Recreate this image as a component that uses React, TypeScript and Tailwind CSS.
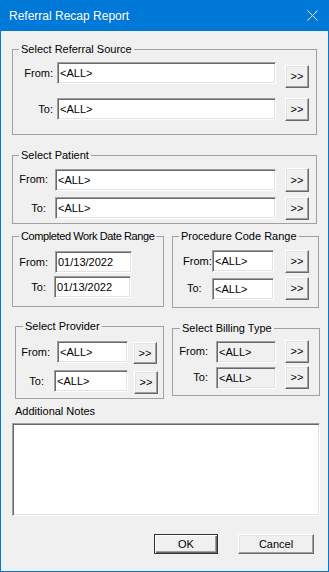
import React from 'react';

const sunken =
  'border border-t-[#a0a0a0] border-l-[#a0a0a0] border-r-white border-b-white shadow-[inset_1px_1px_0_#696969,inset_-1px_-1px_0_#e3e3e3]';
const raised =
  'border border-t-white border-l-white border-r-[#696969] border-b-[#696969] shadow-[inset_-1px_-1px_0_#a0a0a0,inset_1px_1px_0_#e3e3e3] bg-[#f0f0f0]';

interface RowProps {
  label: string;
  value: string;
  rowCls: string; // margin of the row
  labelCls: string; // width + alignment of label column
  inputCls: string; // width / offset of the input
  buttonCls: string; // offset / size of the button
  disabled?: boolean;
}

const Row: React.FC<RowProps> = ({ label, value, rowCls, labelCls, inputCls, buttonCls, disabled }) => (
  <div className={`flex items-start ${rowCls}`}>
    <div className={`h-[22px] flex items-center shrink-0 whitespace-nowrap ${labelCls}`}>{label}</div>
    <input
      readOnly
      value={value}
      className={`h-[22px] px-[2px] outline-none shrink-0 ${sunken} ${disabled ? 'bg-[#f0f0f0]' : 'bg-white'} ${inputCls}`}
    />
    <button className={`w-[24px] shrink-0 flex items-center justify-center text-[11px] leading-none ${raised} ${buttonCls}`}>
      &gt;&gt;
    </button>
  </div>
);

const Legend: React.FC<{ text: string; cls?: string }> = ({ text, cls }) => (
  <legend className={`px-[2px] leading-[14px] whitespace-nowrap ${cls ?? 'ml-[6px]'}`}>{text}</legend>
);

export default function App() {
  return (
    <div className="w-[329px] h-[572px] flex flex-col bg-[#0078d7] font-['Liberation_Sans',Arial,sans-serif] text-[11px] text-black select-none">
      {/* title bar */}
      <div className="h-[31px] shrink-0 flex items-center justify-between pl-[9px] pr-[11px] text-white text-[12px]">
        <span>Referral Recap Report</span>
        <svg width="11" height="11" viewBox="0 0 11 11">
          <path d="M0.5 0.5 L10.5 10.5 M10.5 0.5 L0.5 10.5" stroke="white" strokeWidth="1" />
        </svg>
      </div>

      {/* body */}
      <div className="flex-1 mx-[1px] mb-[1px] bg-[#f0f0f0] flex flex-col">
        {/* Select Referral Source */}
        <fieldset className="ml-[11px] mt-[11px] w-[305px] min-w-0 border border-[#a0a0a0] pb-[13px]">
          <Legend text="Select Referral Source" />
          <Row
            label="From:"
            value="<ALL>"
            rowCls="mt-[6px]"
            labelCls="w-[40px] justify-end"
            inputCls="ml-[4px] w-[219px]"
            buttonCls="ml-[9px] mt-[3px] h-[23px]"
          />
          <Row
            label="To:"
            value="<ALL>"
            rowCls="mt-[10px]"
            labelCls="w-[40px] justify-end"
            inputCls="ml-[4px] w-[219px]"
            buttonCls="ml-[9px] h-[23px]"
          />
        </fieldset>

        {/* Select Patient */}
        <fieldset className="ml-[11px] mt-[13px] w-[305px] min-w-0 border border-[#a0a0a0] pb-[3px]">
          <Legend text="Select Patient" />
          <Row
            label="From:"
            value="<ALL>"
            rowCls="mt-[6px]"
            labelCls="w-[35px] justify-end"
            inputCls="ml-[7px] mt-[1px] w-[221px]"
            buttonCls="ml-[9px] h-[24px]"
          />
          <Row
            label="To:"
            value="<ALL>"
            rowCls="mt-[5px]"
            labelCls="w-[33px] justify-end"
            inputCls="ml-[9px] w-[221px]"
            buttonCls="ml-[9px] h-[23px]"
          />
        </fieldset>

        {/* date range + procedure code */}
        <div className="flex items-start mt-[5px]">
          <fieldset className="ml-[11px] w-[152px] min-w-0 shrink-0 border border-[#a0a0a0] pb-[8px]">
            <Legend text="Completed Work Date Range" cls="ml-[6px] tracking-[-0.4px]" />
            <div className="flex items-center mt-[8px]">
              <div className="w-[35px] h-[22px] flex items-center justify-end">From:</div>
              <input readOnly value="01/13/2022" className={`ml-[7px] w-[77px] h-[22px] px-[2px] bg-white outline-none ${sunken}`} />
            </div>
            <div className="flex items-center mt-[3px]">
              <div className="w-[33px] h-[22px] flex items-center justify-end">To:</div>
              <input readOnly value="01/13/2022" className={`ml-[8px] w-[77px] h-[22px] px-[2px] bg-white outline-none ${sunken}`} />
            </div>
          </fieldset>

          <fieldset className="ml-[8px] w-[147px] min-w-0 shrink-0 border border-[#a0a0a0] pb-[7px]">
            <Legend text="Procedure Code Range" />
            <Row
              label="From:"
              value="<ALL>"
              rowCls="mt-[7px]"
              labelCls="w-[39px] pl-[10px]"
              inputCls="w-[62px]"
              buttonCls="ml-[11px] h-[23px]"
            />
            <Row
              label="To:"
              value="<ALL>"
              rowCls="mt-[4px]"
              labelCls="w-[39px] pl-[14px]"
              inputCls="mt-[1px] w-[62px]"
              buttonCls="ml-[11px] h-[23px]"
            />
          </fieldset>
        </div>

        {/* provider + billing type */}
        <div className="flex items-start mt-[11px]">
          <fieldset className="ml-[14px] w-[149px] min-w-0 shrink-0 border border-[#a0a0a0] pb-[4px]">
            <Legend text="Select Provider" cls="ml-[7px]" />
            <Row
              label="From:"
              value="<ALL>"
              rowCls="mt-[8px]"
              labelCls="w-[34px] justify-end"
              inputCls="ml-[7px] w-[71px]"
              buttonCls="ml-[5px] mt-[1px] h-[22px]"
            />
            <Row
              label="To:"
              value="<ALL>"
              rowCls="mt-[6px]"
              labelCls="w-[28px] justify-end"
              inputCls="ml-[10px] w-[74px]"
              buttonCls="ml-[6px] mt-[1px] h-[23px]"
            />
          </fieldset>

          <fieldset className="ml-[8px] mt-[2px] w-[148px] min-w-0 shrink-0 border border-[#a0a0a0] pb-[6px]">
            <Legend text="Select Billing Type" cls="ml-[7px]" />
            <Row
              label="From:"
              value="<ALL>"
              rowCls="mt-[5px]"
              labelCls="w-[35px] justify-end"
              inputCls="ml-[8px] mt-[1px] w-[60px]"
              buttonCls="ml-[9px] h-[23px]"
              disabled
            />
            <Row
              label="To:"
              value="<ALL>"
              rowCls="mt-[3px]"
              labelCls="w-[35px] justify-end"
              inputCls="ml-[8px] mt-[1px] w-[60px]"
              buttonCls="ml-[9px] h-[23px]"
              disabled
            />
          </fieldset>
        </div>

        {/* notes */}
        <div className="ml-[14px] mt-[5px] leading-[14px]">Additional Notes</div>
        <textarea
          readOnly
          className={`ml-[11px] mt-[5px] w-[308px] h-[93px] resize-none bg-white outline-none ${sunken}`}
        />

        {/* footer buttons */}
        <div className="flex justify-end gap-[20px] mt-[18px] mr-[14px]">
          <button className="w-[64px] h-[20px] border border-[#333333] bg-[#f0f0f0] shadow-[inset_1px_1px_0_white,inset_-1px_-1px_0_#696969,inset_-2px_-2px_0_#a0a0a0] text-[11px]">
            OK
          </button>
          <button className={`w-[76px] h-[20px] text-[11px] ${raised}`}>Cancel</button>
        </div>
      </div>
    </div>
  );
}
